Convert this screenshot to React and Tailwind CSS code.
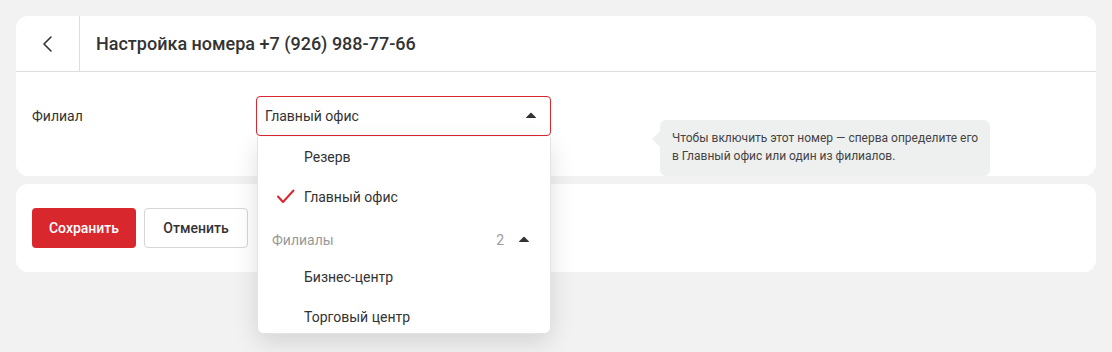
import React from 'react';

function ArrowUp({ className = '' }) {
  return (
    <svg width="24" height="24" viewBox="0 0 24 24" className={className}>
      <path d="M7.3 14h9.4c.3 0 .5-.4.3-.6l-4.7-4.6a.4.4 0 0 0-.6 0L7 13.4c-.2.2 0 .6.3.6z" fill="#333" />
    </svg>
  );
}

function Option({ label, checked }) {
  return (
    <div className="h-10 flex items-center text-sm text-[#333]">
      <div className="w-[46px] flex justify-end pr-[8px]">
        {checked && (
          <svg width="20" height="20" viewBox="0 0 20 20">
            <path d="M2 9.5l5 5.5L17.5 3.5" fill="none" stroke="#d9272e" strokeWidth="2" strokeLinecap="round" strokeLinejoin="round" />
          </svg>
        )}
      </div>
      <span>{label}</span>
    </div>
  );
}

export default function App() {
  return (
    <div className="min-h-[352px] bg-[#f2f2f2] p-4 font-['Roboto',sans-serif] text-[#333]">
      <div className="bg-white rounded-xl">
        <div className="flex h-14 border-b border-[#dedede]">
          <div className="w-16 flex items-center justify-center border-r border-[#dedede]">
            <svg width="24" height="24" viewBox="0 0 24 24">
              <path d="M15 5l-7 7 7 7" fill="none" stroke="#333" strokeWidth="1.6" strokeLinecap="round" strokeLinejoin="round" />
            </svg>
          </div>
          <h1 className="flex items-center pl-4 text-lg font-medium text-[#333]">
            Настройка номера +7 (926) 988-77-66
          </h1>
        </div>

        <div className="flex items-start px-4 pt-6 pb-10">
          <div className="w-[224px] h-10 flex items-center text-sm">Филиал</div>
          <div className="relative w-[295px]">
            <div className="h-10 flex items-center justify-between pl-2 pr-[7px] border border-[#d9272e] rounded text-sm">
              <span>Главный офис</span>
              <ArrowUp />
            </div>

            <div className="absolute z-10 left-[1px] right-0 top-full mt-[1px] h-[197px] overflow-hidden bg-white border border-t-0 border-[#e3e3e3] rounded-b-md shadow-[0_8px_24px_rgba(0,0,0,0.13)]">
              <Option label="Резерв" />
              <Option label="Главный офис" checked />
              <div className="h-10 flex items-center justify-between pt-[6px] pl-[14px] pr-[14px] text-sm text-[#999]">
                <span>Филиалы</span>
                <div className="flex items-center gap-[8px]">
                  <span>2</span>
                  <ArrowUp />
                </div>
              </div>
              <Option label="Бизнес-центр" />
              <Option label="Торговый центр" />
            </div>

            <div className="absolute left-[404px] top-6 w-[330px] bg-[#eeefef] rounded-md pl-3 pr-2 pt-[9px] pb-[11px] text-xs leading-[18px] text-[#444]">
              <div className="absolute left-[-8px] top-[11px] w-0 h-0 border-y-[8px] border-y-transparent border-r-[8px] border-r-[#eeefef]" />
              Чтобы включить этот номер — сперва определите его в Главный офис или один из филиалов.
            </div>
          </div>
        </div>
      </div>

      <div className="mt-2 bg-white rounded-xl px-4 py-6 flex gap-2">
        <button className="w-[104px] h-10 rounded bg-[#d9272e] text-white text-sm font-medium">Сохранить</button>
        <button className="w-[104px] h-10 rounded border border-[#d6d6d6] bg-white text-[#333] text-sm font-medium">Отменить</button>
      </div>
    </div>
  );
}
